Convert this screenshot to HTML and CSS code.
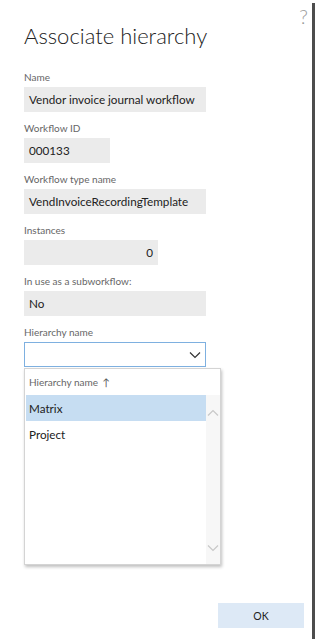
FILE: index.html
```html
<!DOCTYPE html>
<html>
<head>
  <title>Associate hierarchy</title>
  <link rel="stylesheet" href="styles.css">
</head>
<body>

  <div class="dialog">
    <div class="help">?</div>
    <h1 class="title">Associate hierarchy</h1>

    <div class="field-group">
      <label class="field-label">Name</label>
      <div class="field wide">Vendor invoice journal workflow</div>
    </div>

    <div class="field-group">
      <label class="field-label">Workflow ID</label>
      <div class="field short">000133</div>
    </div>

    <div class="field-group">
      <label class="field-label">Workflow type name</label>
      <div class="field wide">VendInvoiceRecordingTemplate</div>
    </div>

    <div class="field-group">
      <label class="field-label">Instances</label>
      <div class="field medium number">0</div>
    </div>

    <div class="field-group">
      <label class="field-label">In use as a subworkflow:</label>
      <div class="field wide">No</div>
    </div>

    <div class="field-group combo-group">
      <label class="field-label">Hierarchy name</label>
      <div class="combo">
        <svg class="chevron" width="12" height="8" viewBox="0 0 12 8">
          <path d="M1 1.5 L6 6.5 L11 1.5" fill="none" stroke="#333" stroke-width="1.2"/>
        </svg>
      </div>

      <div class="dropdown">
        <div class="dropdown-header">Hierarchy name <span class="sort-arrow">&#8593;</span></div>
        <div class="dropdown-body">
          <div class="dropdown-list">
            <div class="dropdown-item selected">Matrix</div>
            <div class="dropdown-item">Project</div>
          </div>
          <div class="scrollbar">
            <svg width="12" height="8" viewBox="0 0 12 8">
              <path d="M1 6.5 L6 1.5 L11 6.5" fill="none" stroke="#c8c8c8" stroke-width="1.2"/>
            </svg>
            <svg width="12" height="8" viewBox="0 0 12 8">
              <path d="M1 1.5 L6 6.5 L11 1.5" fill="none" stroke="#c8c8c8" stroke-width="1.2"/>
            </svg>
          </div>
        </div>
      </div>
    </div>

    <div class="footer">
      <button type="button" class="ok-button">OK</button>
    </div>
  </div>

</body>
</html>
```

FILE: styles.css
```css
body {
  font-family: Lato, "Open Sans", sans-serif;
  background-color: #fff;
  color: #222;
  margin: 0;
  padding: 0;
}

.dialog {
  position: relative;
  width: 312px;
  height: 639px;
  box-sizing: border-box;
  padding: 20px 0 0 24px;
  background-color: #fff;
  box-shadow: 3px 3px 0 #4d4d4d;
  display: flex;
  flex-direction: column;
}

.help {
  position: absolute;
  top: 3px;
  right: 4px;
  font-size: 20px;
  font-weight: 300;
  line-height: 26px;
  color: #999;
}

.title {
  margin: 0 0 17px 0;
  font-size: 22px;
  font-weight: 300;
  line-height: 32px;
  color: #222;
}

.field-group {
  margin-bottom: 8px;
}

.field-label {
  display: block;
  font-size: 10px;
  line-height: 16px;
  color: #666;
  margin-bottom: 2px;
}

.field {
  height: 25px;
  box-sizing: border-box;
  padding: 0 5px;
  background-color: #ebebeb;
  font-size: 11.7px;
  line-height: 25px;
  white-space: nowrap;
}

.wide {
  width: 182px;
}

.short {
  width: 86px;
}

.medium {
  width: 134px;
}

.number {
  text-align: right;
}

.combo-group {
  position: relative;
}

.combo {
  width: 182px;
  height: 25px;
  box-sizing: border-box;
  border: 1px solid #7eb0e0;
  display: flex;
  align-items: center;
  justify-content: flex-end;
  padding-right: 4px;
}

.dropdown {
  position: absolute;
  top: 44px;
  left: 0;
  width: 197px;
  height: 197px;
  box-sizing: border-box;
  background-color: #fff;
  border: 1px solid #d4d4d4;
  box-shadow: 1px 2px 3px rgba(0, 0, 0, 0.25);
  display: flex;
  flex-direction: column;
}

.dropdown-header {
  height: 26px;
  padding-left: 4px;
  font-size: 10px;
  line-height: 26px;
  color: #666;
}

.sort-arrow {
  margin-left: 2px;
  color: #555;
}

.dropdown-body {
  flex: 1;
  display: flex;
  padding-left: 1px;
}

.dropdown-list {
  flex: 1;
}

.dropdown-item {
  height: 26px;
  padding-left: 3px;
  font-size: 11.7px;
  line-height: 26px;
}

.selected {
  background-color: #c6ddf2;
}

.scrollbar {
  width: 14px;
  background-color: #f7f7f7;
  display: flex;
  flex-direction: column;
  justify-content: space-between;
  align-items: center;
  padding: 14px 0 12px 0;
}

.footer {
  margin-top: auto;
  display: flex;
  justify-content: flex-end;
  padding: 0 8px 11px 0;
}

.ok-button {
  width: 86px;
  height: 25px;
  border: none;
  background-color: #dde9f6;
  font-family: Lato, "Open Sans", sans-serif;
  font-size: 10.5px;
  color: #222;
  cursor: pointer;
}
```
